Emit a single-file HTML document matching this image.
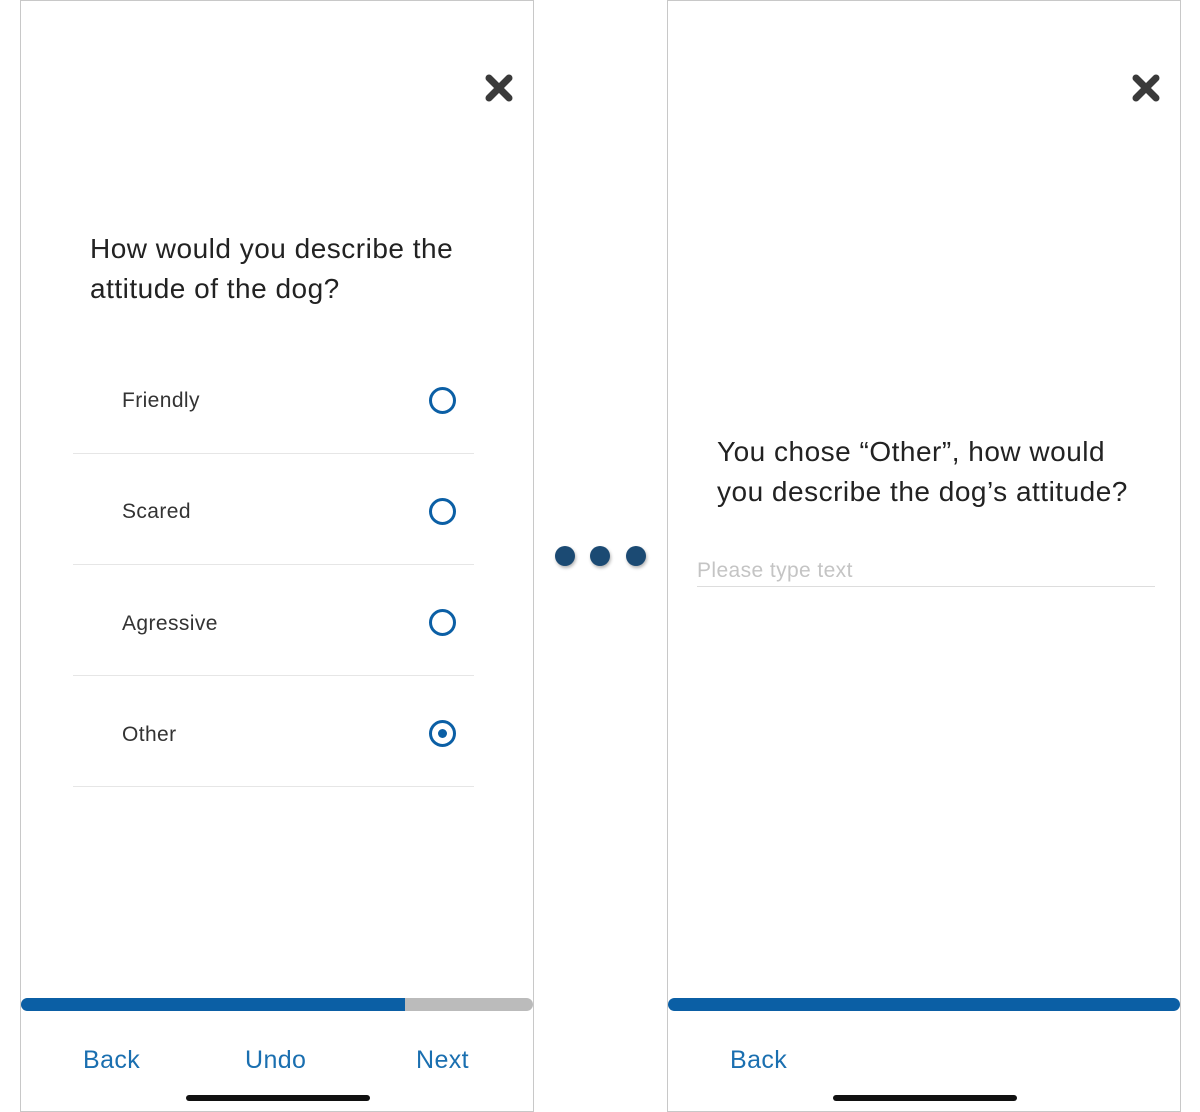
<!DOCTYPE html>
<html><head><style>
body{margin:0;width:1200px;height:1112px;background:#fff;position:relative;overflow:hidden;font-family:"Liberation Sans",sans-serif}
.p{position:absolute;top:0;width:512px;height:1110px;border:1px solid #c8c8c8;background:#fff}
.a{position:absolute}
.q{font-size:28px;color:#222;line-height:40px;letter-spacing:0.5px}
.opt{position:absolute;left:101px;font-size:21px;color:#333;letter-spacing:0.4px}
.line{position:absolute;left:52px;width:401px;height:1px;background:#e6e6e6}
.rad{position:absolute;left:408px;width:21px;height:21px;border:3px solid #0b5fa5;border-radius:50%}
.btn{position:absolute;top:1045px;font-size:25px;color:#1a6fb0;letter-spacing:0.4px}
.home{position:absolute;top:1094px;width:184px;height:6px;border-radius:3px;background:#111}
.dot{position:absolute;top:546px;width:20px;height:20px;border-radius:50%;background:#1b4a73;box-shadow:1px 2px 3px rgba(0,0,0,.3)}
</style></head><body>
<div class="p" style="left:20px">
 <svg class="a" style="left:464px;top:73px" width="28" height="28" viewBox="0 0 28 28"><path d="M4 4L24 24M24 4L4 24" stroke="#3a3a3a" stroke-width="7" stroke-linecap="round"/></svg>
 <div class="a q" style="left:69px;top:228px">How would you describe the<br>attitude of the dog?</div>
 <div class="opt" style="top:388px">Friendly</div><div class="rad" style="top:386px"></div><div class="line" style="top:452px"></div>
 <div class="opt" style="top:499px">Scared</div><div class="rad" style="top:497px"></div><div class="line" style="top:563px"></div>
 <div class="opt" style="top:611px">Agressive</div><div class="rad" style="top:608px"></div><div class="line" style="top:674px"></div>
 <div class="opt" style="top:722px">Other</div><div class="rad" style="top:719px"><div style="position:absolute;left:6px;top:6px;width:9px;height:9px;border-radius:50%;background:#0b5fa5"></div></div><div class="line" style="top:785px"></div>
 <div class="a" style="left:0;top:997px;width:512px;height:13px;border-radius:7px;background:#bbb;overflow:hidden"><div style="width:384px;height:13px;background:#0b5fa5"></div></div>
 <div class="btn" style="left:62px">Back</div><div class="btn" style="left:224px">Undo</div><div class="btn" style="left:395px">Next</div>
 <div class="home" style="left:165px"></div>
</div>
<div class="dot" style="left:555px"></div><div class="dot" style="left:590px"></div><div class="dot" style="left:626px"></div>
<div class="p" style="left:667px">
 <svg class="a" style="left:464px;top:73px" width="28" height="28" viewBox="0 0 28 28"><path d="M4 4L24 24M24 4L4 24" stroke="#3a3a3a" stroke-width="7" stroke-linecap="round"/></svg>
 <div class="a q" style="left:49px;top:431px">You chose “Other”, how would<br>you describe the dog’s attitude?</div>
 <div class="a" style="left:29px;top:558px;font-size:21px;color:#c4c4c4;letter-spacing:0.4px">Please type text</div>
 <div class="a" style="left:29px;top:585px;width:458px;height:1px;background:#ddd"></div>
 <div class="a" style="left:0;top:997px;width:512px;height:13px;border-radius:7px;background:#0b5fa5"></div>
 <div class="btn" style="left:62px">Back</div>
 <div class="home" style="left:165px"></div>
</div>
</body></html>
